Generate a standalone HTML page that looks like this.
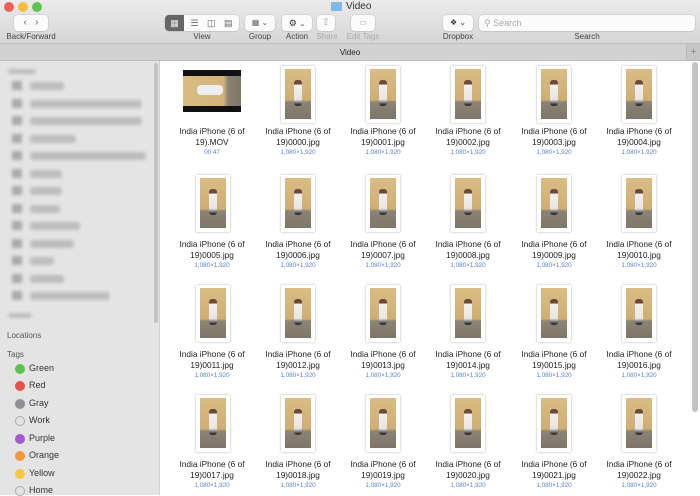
<!DOCTYPE html>
<html><head><meta charset="utf-8"><style>
*{margin:0;padding:0;box-sizing:border-box}
body{width:700px;height:495px;overflow:hidden;font-family:"Liberation Sans",sans-serif;background:#fff;position:relative}
.tb{position:absolute;left:0;top:0;width:700px;height:44px;background:linear-gradient(#ebebeb,#d6d6d6);border-bottom:1px solid #bdbdbd}
.dot{position:absolute;top:2px;width:10px;height:10px;border-radius:50%}
.btn{position:absolute;top:15px;height:16px;background:#fbfbfb;border-radius:4px;box-shadow:0 0 0 .5px #c4c4c4,0 1px 1px rgba(0,0,0,.1);color:#666;font-size:10px;text-align:center;line-height:16px}
.lbl{position:absolute;top:32px;font-size:8px;color:#444;text-align:center}
.tab{position:absolute;left:0;top:44px;width:700px;height:17px;background:#d1d1d1;border-bottom:1px solid #bcbcbc;font-size:8px;color:#222;text-align:center;line-height:17px}
.side{position:absolute;left:0;top:61px;width:160px;height:434px;background:#e4e4e4;border-right:1px solid #d0d0d0}
.blur{position:absolute;left:14px;height:8px;background:#bdbdbd;border-radius:3px;filter:blur(1.5px)}
.bi{position:absolute;left:12px;width:10px;height:9px;background:#aaa;filter:blur(1.5px)}
.tag{position:absolute;left:29px;font-size:9px;color:#333}
.td{position:absolute;left:15px;width:10px;height:10px;border-radius:50%}
.it{position:absolute;width:86px;text-align:center;font-size:8.3px;color:#222;line-height:11px}
.it .s{font-size:6.3px;color:#5b7fc4;line-height:10px}
.ph{position:absolute;width:34px;height:57px;background:#fff;box-shadow:0 0 2px rgba(0,0,0,.35)}
.ph i{position:absolute;left:4px;top:3px;width:26px;height:50px;background:linear-gradient(#d9bd85 0,#cfae74 62%,#8c8475 66%,#7d7668 100%)}
.ph b{position:absolute;left:13px;top:14px;width:8px;height:26px;background:linear-gradient(#6b4a3a 0,#6b4a3a 15%,#f2f0ec 20%,#e8e6e2 75%,#333 95%);border-radius:3px}
</style></head><body>
<div class="tb">
<div class="dot" style="left:4px;background:#ed5f58"></div>
<div class="dot" style="left:18px;background:#f5bd3b"></div>
<div class="dot" style="left:32px;background:#5fc452"></div>
<div style="position:absolute;left:331px;top:2px;width:11px;height:9px;background:#7db8e8;border-radius:1px"></div>
<div style="position:absolute;left:346px;top:1px;font-size:10px;color:#333">Video</div>
<div class="btn" style="left:14px;width:34px">&lsaquo;&nbsp;&nbsp;&nbsp;&rsaquo;</div>
<div class="lbl" style="left:0;width:62px">Back/Forward</div>
<div class="btn" style="left:165px;width:74px;background:#fbfbfb"></div>
<div style="position:absolute;left:165px;top:15px;width:19px;height:16px;background:#666;border-radius:4px 0 0 4px;color:#eee;font-size:9px;text-align:center;line-height:16px">&#9638;</div>
<div style="position:absolute;left:184px;top:15px;width:55px;height:16px;font-size:9px;color:#666;line-height:16px;word-spacing:6px;text-align:center">&#9776; &#9707; &#9636;</div>
<div class="lbl" style="left:180px;width:44px">View</div>
<div class="btn" style="left:245px;width:30px;font-size:8px">&#9638; &#8964;</div>
<div class="lbl" style="left:240px;width:40px">Group</div>
<div class="btn" style="left:282px;width:30px;font-size:9px;color:#333">&#9881; <span style="font-size:7px">&#8964;</span></div>
<div class="lbl" style="left:277px;width:40px">Action</div>
<div class="btn" style="left:317px;width:18px;color:#aaa">&#8679;</div>
<div class="lbl" style="left:310px;width:34px;color:#aaa">Share</div>
<div class="btn" style="left:351px;width:24px;color:#aaa;font-size:8px">&#9645;</div>
<div class="lbl" style="left:343px;width:40px;color:#aaa">Edit Tags</div>
<div class="btn" style="left:443px;width:30px;font-size:8px;color:#333">&#10070; &#8964;</div>
<div class="lbl" style="left:436px;width:44px">Dropbox</div>
<div class="btn" style="left:479px;width:216px;text-align:left;padding-left:5px;color:#aaa;font-size:9px">&#9906; Search</div>
<div class="lbl" style="left:560px;width:54px">Search</div>
</div>
<div class="tab">Video<div style="position:absolute;right:0;top:0;width:14px;height:16px;background:#c6c6c6;border-left:1px solid #b8b8b8;color:#888;font-size:11px;line-height:16px">+</div></div>
<div class="side">
<div class="blur" style="top:8px;width:28px;height:5px;left:8px"></div>
<div class="bi" style="top:20px"></div><div class="blur" style="left:30px;top:21px;width:34px"></div>
<div class="bi" style="top:38px"></div><div class="blur" style="left:30px;top:39px;width:112px"></div>
<div class="bi" style="top:55px"></div><div class="blur" style="left:30px;top:56px;width:112px"></div>
<div class="bi" style="top:73px"></div><div class="blur" style="left:30px;top:74px;width:46px"></div>
<div class="bi" style="top:90px"></div><div class="blur" style="left:30px;top:91px;width:116px"></div>
<div class="bi" style="top:108px"></div><div class="blur" style="left:30px;top:109px;width:32px"></div>
<div class="bi" style="top:125px"></div><div class="blur" style="left:30px;top:126px;width:32px"></div>
<div class="bi" style="top:143px"></div><div class="blur" style="left:30px;top:144px;width:30px"></div>
<div class="bi" style="top:160px"></div><div class="blur" style="left:30px;top:161px;width:50px"></div>
<div class="bi" style="top:178px"></div><div class="blur" style="left:30px;top:179px;width:44px"></div>
<div class="bi" style="top:195px"></div><div class="blur" style="left:30px;top:196px;width:24px"></div>
<div class="bi" style="top:213px"></div><div class="blur" style="left:30px;top:214px;width:34px"></div>
<div class="bi" style="top:230px"></div><div class="blur" style="left:30px;top:231px;width:80px"></div>
<div class="blur" style="top:252px;width:24px;left:8px;height:5px"></div>
<div style="position:absolute;left:7px;top:270px;font-size:8px;color:#555">Locations</div>
<div style="position:absolute;left:7px;top:289px;font-size:8px;color:#555">Tags</div>
<div style="position:absolute;left:154px;top:2px;width:4px;height:260px;background:#c2c2c2;border-radius:2px"></div>
<div class="td" style="top:303px;background:#5cc150"></div><div class="tag" style="top:302px">Green</div>
<div class="td" style="top:320px;background:#e6514a"></div><div class="tag" style="top:319px">Red</div>
<div class="td" style="top:338px;background:#909095"></div><div class="tag" style="top:337px">Gray</div>
<div class="td" style="top:355px;border:1px solid #aaa"></div><div class="tag" style="top:354px">Work</div>
<div class="td" style="top:373px;background:#a05bd1"></div><div class="tag" style="top:372px">Purple</div>
<div class="td" style="top:390px;background:#f19a38"></div><div class="tag" style="top:389px">Orange</div>
<div class="td" style="top:408px;background:#f5c842"></div><div class="tag" style="top:407px">Yellow</div>
<div class="td" style="top:425px;border:1px solid #aaa"></div><div class="tag" style="top:424px">Home</div>
</div>
<div style="position:absolute;left:692px;top:62px;width:6px;height:350px;background:#c4c4c4;border-radius:3px"></div>

<!-- row1 -->
<div style="position:absolute;left:183px;top:70px;width:58px;height:42px;background:#111"><div style="position:absolute;left:0;top:6px;width:58px;height:30px;background:linear-gradient(90deg,#d9bd85 0,#d2b47a 70%,#8a8272 78%,#7d7668)"></div><div style="position:absolute;left:14px;top:15px;width:26px;height:10px;background:#eee;border-radius:4px"></div></div>
<div class="it" style="left:169px;top:126px">India iPhone (6 of<br>19).MOV<div class="s">00:47</div></div>
<div class="ph" style="left:281px;top:66px"><i></i><b></b></div><div class="it" style="left:255px;top:126px">India iPhone (6 of<br>19)0000.jpg<div class="s">1,080×1,920</div></div>
<div class="ph" style="left:366px;top:66px"><i></i><b></b></div><div class="it" style="left:340px;top:126px">India iPhone (6 of<br>19)0001.jpg<div class="s">1,080×1,920</div></div>
<div class="ph" style="left:451px;top:66px"><i></i><b></b></div><div class="it" style="left:425px;top:126px">India iPhone (6 of<br>19)0002.jpg<div class="s">1,080×1,920</div></div>
<div class="ph" style="left:537px;top:66px"><i></i><b></b></div><div class="it" style="left:511px;top:126px">India iPhone (6 of<br>19)0003.jpg<div class="s">1,080×1,920</div></div>
<div class="ph" style="left:622px;top:66px"><i></i><b></b></div><div class="it" style="left:596px;top:126px">India iPhone (6 of<br>19)0004.jpg<div class="s">1,080×1,920</div></div>
<!-- row2 -->
<div class="ph" style="left:196px;top:175px"><i></i><b></b></div><div class="it" style="left:169px;top:239px">India iPhone (6 of<br>19)0005.jpg<div class="s">1,080×1,920</div></div>
<div class="ph" style="left:281px;top:175px"><i></i><b></b></div><div class="it" style="left:255px;top:239px">India iPhone (6 of<br>19)0006.jpg<div class="s">1,080×1,920</div></div>
<div class="ph" style="left:366px;top:175px"><i></i><b></b></div><div class="it" style="left:340px;top:239px">India iPhone (6 of<br>19)0007.jpg<div class="s">1,080×1,920</div></div>
<div class="ph" style="left:451px;top:175px"><i></i><b></b></div><div class="it" style="left:425px;top:239px">India iPhone (6 of<br>19)0008.jpg<div class="s">1,080×1,920</div></div>
<div class="ph" style="left:537px;top:175px"><i></i><b></b></div><div class="it" style="left:511px;top:239px">India iPhone (6 of<br>19)0009.jpg<div class="s">1,080×1,920</div></div>
<div class="ph" style="left:622px;top:175px"><i></i><b></b></div><div class="it" style="left:596px;top:239px">India iPhone (6 of<br>19)0010.jpg<div class="s">1,080×1,920</div></div>
<!-- row3 -->
<div class="ph" style="left:196px;top:285px"><i></i><b></b></div><div class="it" style="left:169px;top:349px">India iPhone (6 of<br>19)0011.jpg<div class="s">1,080×1,920</div></div>
<div class="ph" style="left:281px;top:285px"><i></i><b></b></div><div class="it" style="left:255px;top:349px">India iPhone (6 of<br>19)0012.jpg<div class="s">1,080×1,920</div></div>
<div class="ph" style="left:366px;top:285px"><i></i><b></b></div><div class="it" style="left:340px;top:349px">India iPhone (6 of<br>19)0013.jpg<div class="s">1,080×1,920</div></div>
<div class="ph" style="left:451px;top:285px"><i></i><b></b></div><div class="it" style="left:425px;top:349px">India iPhone (6 of<br>19)0014.jpg<div class="s">1,080×1,920</div></div>
<div class="ph" style="left:537px;top:285px"><i></i><b></b></div><div class="it" style="left:511px;top:349px">India iPhone (6 of<br>19)0015.jpg<div class="s">1,080×1,920</div></div>
<div class="ph" style="left:622px;top:285px"><i></i><b></b></div><div class="it" style="left:596px;top:349px">India iPhone (6 of<br>19)0016.jpg<div class="s">1,080×1,920</div></div>
<!-- row4 -->
<div class="ph" style="left:196px;top:395px"><i></i><b></b></div><div class="it" style="left:169px;top:459px">India iPhone (6 of<br>19)0017.jpg<div class="s">1,080×1,920</div></div>
<div class="ph" style="left:281px;top:395px"><i></i><b></b></div><div class="it" style="left:255px;top:459px">India iPhone (6 of<br>19)0018.jpg<div class="s">1,080×1,920</div></div>
<div class="ph" style="left:366px;top:395px"><i></i><b></b></div><div class="it" style="left:340px;top:459px">India iPhone (6 of<br>19)0019.jpg<div class="s">1,080×1,920</div></div>
<div class="ph" style="left:451px;top:395px"><i></i><b></b></div><div class="it" style="left:425px;top:459px">India iPhone (6 of<br>19)0020.jpg<div class="s">1,080×1,920</div></div>
<div class="ph" style="left:537px;top:395px"><i></i><b></b></div><div class="it" style="left:511px;top:459px">India iPhone (6 of<br>19)0021.jpg<div class="s">1,080×1,920</div></div>
<div class="ph" style="left:622px;top:395px"><i></i><b></b></div><div class="it" style="left:596px;top:459px">India iPhone (6 of<br>19)0022.jpg<div class="s">1,080×1,920</div></div>
</body></html>
